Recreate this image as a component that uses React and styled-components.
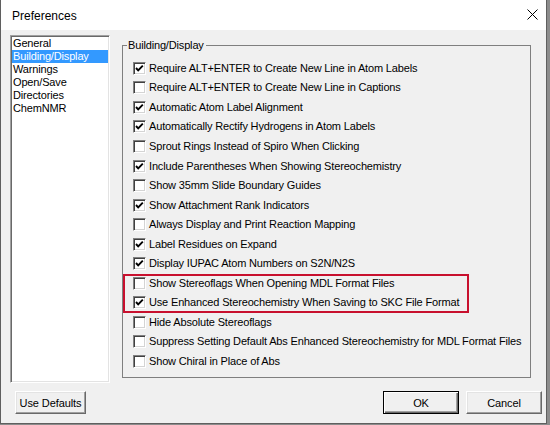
import React from 'react';
import styled, { createGlobalStyle } from 'styled-components';

const Global = createGlobalStyle`
  html, body { margin: 0; padding: 0; background: #8c8c8c; }
  body { width: 550px; height: 425px; overflow: hidden; font-family: "Liberation Sans", Arial, sans-serif; }
`;

const Window = styled.div`
  width: 547px;
  height: 424px;
  box-sizing: border-box;
  border: 1px solid #5f5f5f;
  border-top: none;
  background: #f0f0f0;
  display: flex;
  flex-direction: column;
`;

const TitleBar = styled.div`
  height: 30px;
  flex: none;
  background: #fff;
  display: flex;
  align-items: center;
  justify-content: space-between;
  padding: 0 8px 0 11px;
  font-family: "Liberation Sans", Arial, sans-serif;
  font-size: 12px;
  color: #000;
`;

const Title = styled.span`
  margin-top: 1px;
`;

const CloseIcon = styled.svg`
  width: 11px;
  height: 11px;
  margin-top: -1px;
`;

const Main = styled.div`
  display: flex;
  padding: 5px 0 0 9px;
`;

const ListBox = styled.div`
  width: 100px;
  height: 348px;
  box-sizing: border-box;
  background: #fff;
  border: 1px solid;
  border-color: #a0a0a0 #fff #fff #a0a0a0;
  box-shadow: inset 1px 1px 0 #696969, inset -1px -1px 0 #e3e3e3;
  padding: 1px;
  font-size: 11px;
  letter-spacing: -0.16px;
`;

const ListItem = styled.div`
  height: 13px;
  line-height: 13px;
  padding-left: 1px;
  white-space: nowrap;
  color: ${p => (p.$selected ? '#fff' : '#000')};
  background: ${p => (p.$selected ? '#3399ff' : 'transparent')};
`;

const Group = styled.div`
  position: relative;
  margin: 10px 0 0 12px;
  width: 409px;
  height: 333px;
  box-sizing: border-box;
  border: 1px solid #7f7f7f;
  padding-top: 12.5px;
  font-size: 11px;
  letter-spacing: -0.16px;
`;

const GroupTitle = styled.span`
  position: absolute;
  top: -7px;
  left: 4px;
  padding: 0 2px 0 1px;
  background: #f0f0f0;
  line-height: 13px;
`;

const Row = styled.div`
  height: 19.55px;
  display: flex;
  align-items: center;
  padding-left: 10px;
  gap: 3px;
  white-space: nowrap;
  color: #000;
`;

const Box = styled.span`
  width: 13px;
  height: 13px;
  box-sizing: border-box;
  flex: none;
  background: #fff;
  border: 1px solid;
  border-color: #808080 #fff #fff #808080;
  box-shadow: inset 1px 1px 0 #404040, inset -1px -1px 0 #d4d4d4;
  display: flex;
  align-items: center;
  justify-content: center;
`;

const Label = styled.span`
  line-height: 13px;
`;

const Highlight = styled.div`
  width: 346px;
  outline: 2px solid #c8102e;
  outline-offset: -2px;
`;

const Footer = styled.div`
  display: flex;
  align-items: center;
  margin-top: 8px;
  padding: 0 4px 0 14px;
  gap: 7px;
`;

const Spacer = styled.div`
  flex: 1;
`;

const Button = styled.button`
  width: ${p => p.$w}px;
  height: 23px;
  box-sizing: border-box;
  padding: 0;
  font-family: "Liberation Sans", Arial, sans-serif;
  font-size: 11px;
  letter-spacing: -0.1px;
  color: #000;
  background: #f0f0f0;
  border: 1px solid;
  border-color: ${p => (p.$default ? '#000' : '#fff #696969 #696969 #fff')};
  box-shadow: ${p =>
    p.$default
      ? 'inset 1px 1px 0 #fff, inset -1px -1px 0 #696969, inset -2px -2px 0 #a0a0a0'
      : 'inset -1px -1px 0 #a0a0a0, inset 1px 1px 0 #e3e3e3'};
`;

const Check = () => (
  <svg width="9" height="9" viewBox="0 0 9 9">
    <polyline points="1,4 3.2,6.4 7.8,1.6" fill="none" stroke="#000" strokeWidth="1.9" />
  </svg>
);

const CheckRow = ({ checked, children }) => (
  <Row>
    <Box>{checked && <Check />}</Box>
    <Label>{children}</Label>
  </Row>
);

const items = ['General', 'Building/Display', 'Warnings', 'Open/Save', 'Directories', 'ChemNMR'];

const before = [
  [true, 'Require ALT+ENTER to Create New Line in Atom Labels'],
  [false, 'Require ALT+ENTER to Create New Line in Captions'],
  [true, 'Automatic Atom Label Alignment'],
  [true, 'Automatically Rectify Hydrogens in Atom Labels'],
  [false, 'Sprout Rings Instead of Spiro When Clicking'],
  [true, 'Include Parentheses When Showing Stereochemistry'],
  [false, 'Show 35mm Slide Boundary Guides'],
  [true, 'Show Attachment Rank Indicators'],
  [false, 'Always Display and Print Reaction Mapping'],
  [true, 'Label Residues on Expand'],
  [true, 'Display IUPAC Atom Numbers on S2N/N2S'],
];

const marked = [
  [false, 'Show Stereoflags When Opening MDL Format Files'],
  [true, 'Use Enhanced Stereochemistry When Saving to SKC File Format'],
];

const after = [
  [false, 'Hide Absolute Stereoflags'],
  [false, 'Suppress Setting Default Abs Enhanced Stereochemistry for MDL Format Files'],
  [false, 'Show Chiral in Place of Abs'],
];

export default function App() {
  return (
    <>
      <Global />
      <Window>
        <TitleBar>
          <Title>Preferences</Title>
          <CloseIcon viewBox="0 0 11 11">
            <path d="M0.5 0.5 L10.5 10.5 M10.5 0.5 L0.5 10.5" stroke="#000" strokeWidth="1" fill="none" />
          </CloseIcon>
        </TitleBar>
        <Main>
          <ListBox>
            {items.map(it => (
              <ListItem key={it} $selected={it === 'Building/Display'}>{it}</ListItem>
            ))}
          </ListBox>
          <Group>
            <GroupTitle>Building/Display</GroupTitle>
            {before.map(([c, t]) => <CheckRow key={t} checked={c}>{t}</CheckRow>)}
            <Highlight>
              {marked.map(([c, t]) => <CheckRow key={t} checked={c}>{t}</CheckRow>)}
            </Highlight>
            {after.map(([c, t]) => <CheckRow key={t} checked={c}>{t}</CheckRow>)}
          </Group>
        </Main>
        <Footer>
          <Button $w={71}>Use Defaults</Button>
          <Spacer />
          <Button $w={76} $default>OK</Button>
          <Button $w={76}>Cancel</Button>
        </Footer>
      </Window>
    </>
  );
}
